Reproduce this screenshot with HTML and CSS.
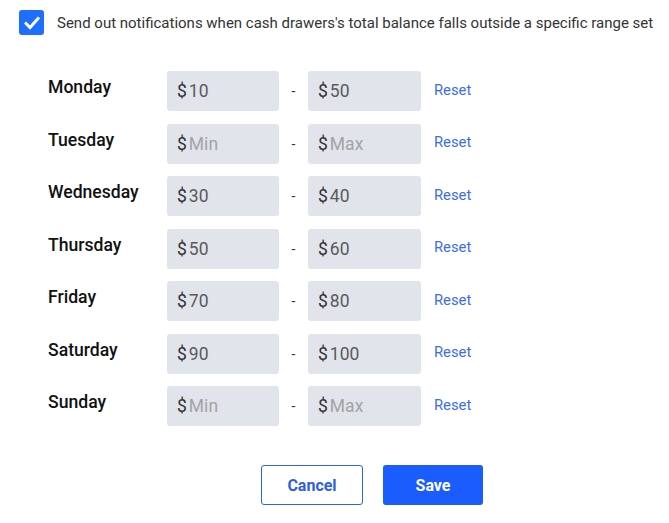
FILE: index.html
```
<!DOCTYPE html>
<html lang="en">
<head>
    <meta charset="UTF-8">
    <meta name="viewport" content="width=device-width, initial-scale=1.0">
    <title>Cash Drawer Notifications</title>
    <link rel="stylesheet" href="styles.css">
</head>
<body>
    <div class="panel">
        <label class="notify">
            <span class="check">
                <svg width="16" height="14" viewBox="0 0 16 14"><path d="M2 7.5 L6 11.5 L14 2.5" fill="none" stroke="#fff" stroke-width="3" stroke-linecap="square"/></svg>
            </span>
            <span class="notify-text">Send out notifications when cash drawers's total balance falls outside a specific range set</span>
        </label>

        <div class="ranges">
            <div class="day">Monday</div>
            <label class="field"><span class="cur">$</span><input type="text" value="10" placeholder="Min"></label>
            <div class="dash">-</div>
            <label class="field"><span class="cur">$</span><input type="text" value="50" placeholder="Max"></label>
            <a class="reset" href="#">Reset</a>

            <div class="day">Tuesday</div>
            <label class="field"><span class="cur">$</span><input type="text" value="" placeholder="Min"></label>
            <div class="dash">-</div>
            <label class="field"><span class="cur">$</span><input type="text" value="" placeholder="Max"></label>
            <a class="reset" href="#">Reset</a>

            <div class="day">Wednesday</div>
            <label class="field"><span class="cur">$</span><input type="text" value="30" placeholder="Min"></label>
            <div class="dash">-</div>
            <label class="field"><span class="cur">$</span><input type="text" value="40" placeholder="Max"></label>
            <a class="reset" href="#">Reset</a>

            <div class="day">Thursday</div>
            <label class="field"><span class="cur">$</span><input type="text" value="50" placeholder="Min"></label>
            <div class="dash">-</div>
            <label class="field"><span class="cur">$</span><input type="text" value="60" placeholder="Max"></label>
            <a class="reset" href="#">Reset</a>

            <div class="day">Friday</div>
            <label class="field"><span class="cur">$</span><input type="text" value="70" placeholder="Min"></label>
            <div class="dash">-</div>
            <label class="field"><span class="cur">$</span><input type="text" value="80" placeholder="Max"></label>
            <a class="reset" href="#">Reset</a>

            <div class="day">Saturday</div>
            <label class="field"><span class="cur">$</span><input type="text" value="90" placeholder="Min"></label>
            <div class="dash">-</div>
            <label class="field"><span class="cur">$</span><input type="text" value="100" placeholder="Max"></label>
            <a class="reset" href="#">Reset</a>

            <div class="day">Sunday</div>
            <label class="field"><span class="cur">$</span><input type="text" value="" placeholder="Min"></label>
            <div class="dash">-</div>
            <label class="field"><span class="cur">$</span><input type="text" value="" placeholder="Max"></label>
            <a class="reset" href="#">Reset</a>
        </div>

        <div class="actions">
            <button class="btn btn-cancel">Cancel</button>
            <button class="btn btn-save">Save</button>
        </div>
    </div>
</body>
</html>
```

FILE: styles.css
```
body {
    margin: 0;
    font-family: Roboto, "Noto Sans", sans-serif;
    background-color: #fff;
    color: #222;
}

.panel {
    padding: 10px 0 0 19px;
}

.notify {
    display: flex;
    align-items: center;
    gap: 13px;
}

.check {
    width: 25px;
    height: 25px;
    border-radius: 3px;
    background-color: #1f6fff;
    display: flex;
    align-items: center;
    justify-content: center;
    flex-shrink: 0;
}

.notify-text {
    font-size: 15px;
    color: #333;
    white-space: nowrap;
}

.ranges {
    display: grid;
    grid-template-columns: 119px 112px 29px 113px auto;
    grid-auto-rows: 40px;
    row-gap: 12.5px;
    margin: 36px 0 0 29px;
}

.day {
    font-size: 17.6px;
    font-weight: 500;
    color: #111;
    padding-top: 6px;
}

.field {
    display: flex;
    align-items: center;
    background-color: #e1e4eb;
    border-radius: 3px;
    padding: 0 10px;
    font-size: 17.5px;
}

.cur {
    color: #333;
    margin-right: 2px;
}

.field input {
    border: none;
    background: transparent;
    outline: none;
    width: 100%;
    padding: 0;
    font-family: inherit;
    font-size: inherit;
    color: #5a5a5a;
}

.field input::placeholder {
    color: #a3a3a3;
}

.dash {
    display: flex;
    align-items: center;
    justify-content: center;
    font-size: 14px;
    color: #333;
}

.reset {
    display: flex;
    align-items: center;
    padding-left: 13px;
    font-size: 14.8px;
    color: #3b6cf0;
    text-decoration: none;
    margin-top: -3px;
}

.actions {
    display: flex;
    gap: 20px;
    margin: 39px 0 0 242px;
}

.btn {
    height: 40px;
    border-radius: 3px;
    font-family: inherit;
    font-size: 16px;
    font-weight: 700;
    cursor: pointer;
}

.btn-cancel {
    width: 102px;
    background-color: #fff;
    border: 1px solid #2b63f0;
    color: #2d5fe0;
}

.btn-save {
    width: 100px;
    background-color: #1a5cff;
    border: none;
    color: #fff;
}
```
